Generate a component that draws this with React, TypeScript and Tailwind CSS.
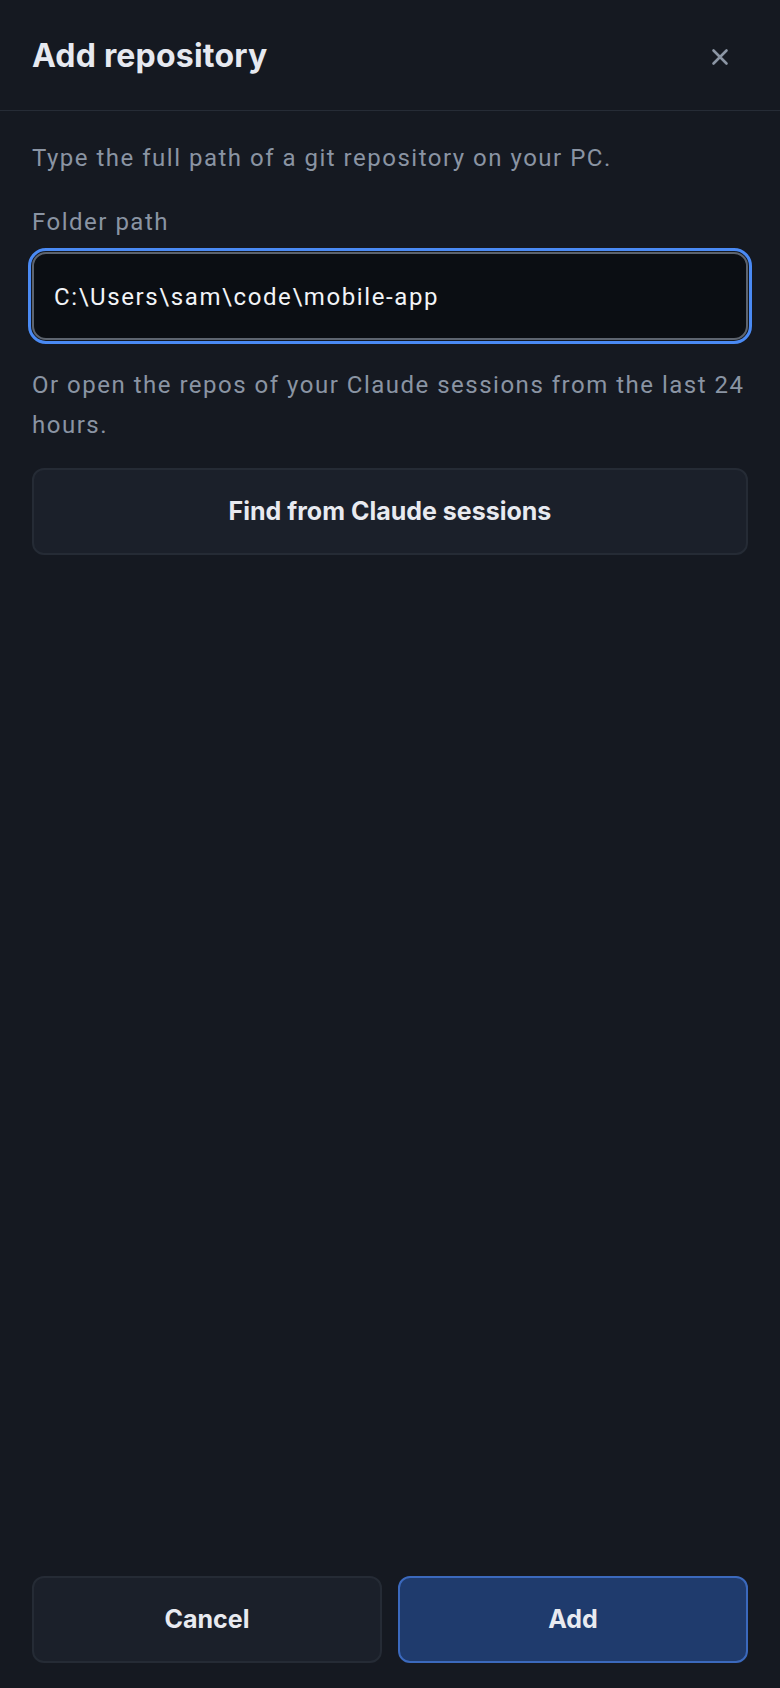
import { useState } from 'react';

const bodyFont = { fontFamily: 'Roboto, "Noto Sans", sans-serif' };
const headFont = { fontFamily: 'Inter, Roboto, sans-serif' };

const CloseIcon = () => (
  <svg width="18" height="18" viewBox="0 0 18 18" fill="none" aria-hidden="true">
    <path d="M2.5 2.5l13 13M15.5 2.5l-13 13" stroke="currentColor" strokeWidth="2.6" strokeLinecap="round" />
  </svg>
);

export default function App() {
  const [path, setPath] = useState('C:\\Users\\sam\\code\\mobile-app');

  return (
    <div className="flex h-[1688px] w-full flex-col bg-[#151921]" style={bodyFont}>
      {/* Header */}
      <header className="flex h-[111px] shrink-0 items-center justify-between border-b border-[#262c36] pl-8 pr-[51px]">
        <h1 className="mt-0.5 text-[32px] font-bold tracking-[0.2px] text-[#e6e9f0]" style={headFont}>
          Add repository
        </h1>
        <button type="button" className="mt-1 text-[#8b95a4]" aria-label="Close">
          <CloseIcon />
        </button>
      </header>

      {/* Body */}
      <main className="flex flex-1 flex-col px-8 pt-[27px]">
        <p className="text-[24px] leading-[40px] tracking-[1.5px] text-[#8a94a3]">
          Type the full path of a git repository on your PC.
        </p>

        <label htmlFor="folder-path" className="mt-6 text-[24px] leading-[40px] tracking-[1.5px] text-[#8a94a3]">
          Folder path
        </label>
        <input
          id="folder-path"
          value={path}
          onChange={(e) => setPath(e.target.value)}
          className="mt-[10px] h-[88px] w-full rounded-[14px] border-2 border-[#5d646f] bg-[#0b0e13] px-5 pt-0.5 text-[24px] tracking-[1.6px] text-[#f2f4f7] outline-3 outline-offset-1 outline-[#4a8af4]"
        />

        <p className="mt-[25px] text-[24px] leading-[40px] tracking-[1.5px] text-[#8a94a3]">
          Or open the repos of your Claude sessions from the last 24 hours.
        </p>

        <button
          type="button"
          className="mt-[23px] h-[87px] w-full rounded-[12px] border-2 border-[#252b35] bg-[#1b202a] text-[25px] font-bold text-[#e8eaf0]"
          style={headFont}
        >
          Find from Claude sessions
        </button>
      </main>

      {/* Footer actions */}
      <footer className="grid shrink-0 grid-cols-2 gap-4 px-8 pb-[25px]">
        <button
          type="button"
          className="h-[87px] rounded-[12px] border-2 border-[#252b35] bg-[#1b202a] text-[25px] font-bold text-[#e8eaf0]"
          style={headFont}
        >
          Cancel
        </button>
        <button
          type="button"
          className="h-[87px] rounded-[12px] border-2 border-[#3b69bd] bg-[#1f3b6d] text-[25px] font-bold text-[#e8eaf0]"
          style={headFont}
        >
          Add
        </button>
      </footer>
    </div>
  );
}
